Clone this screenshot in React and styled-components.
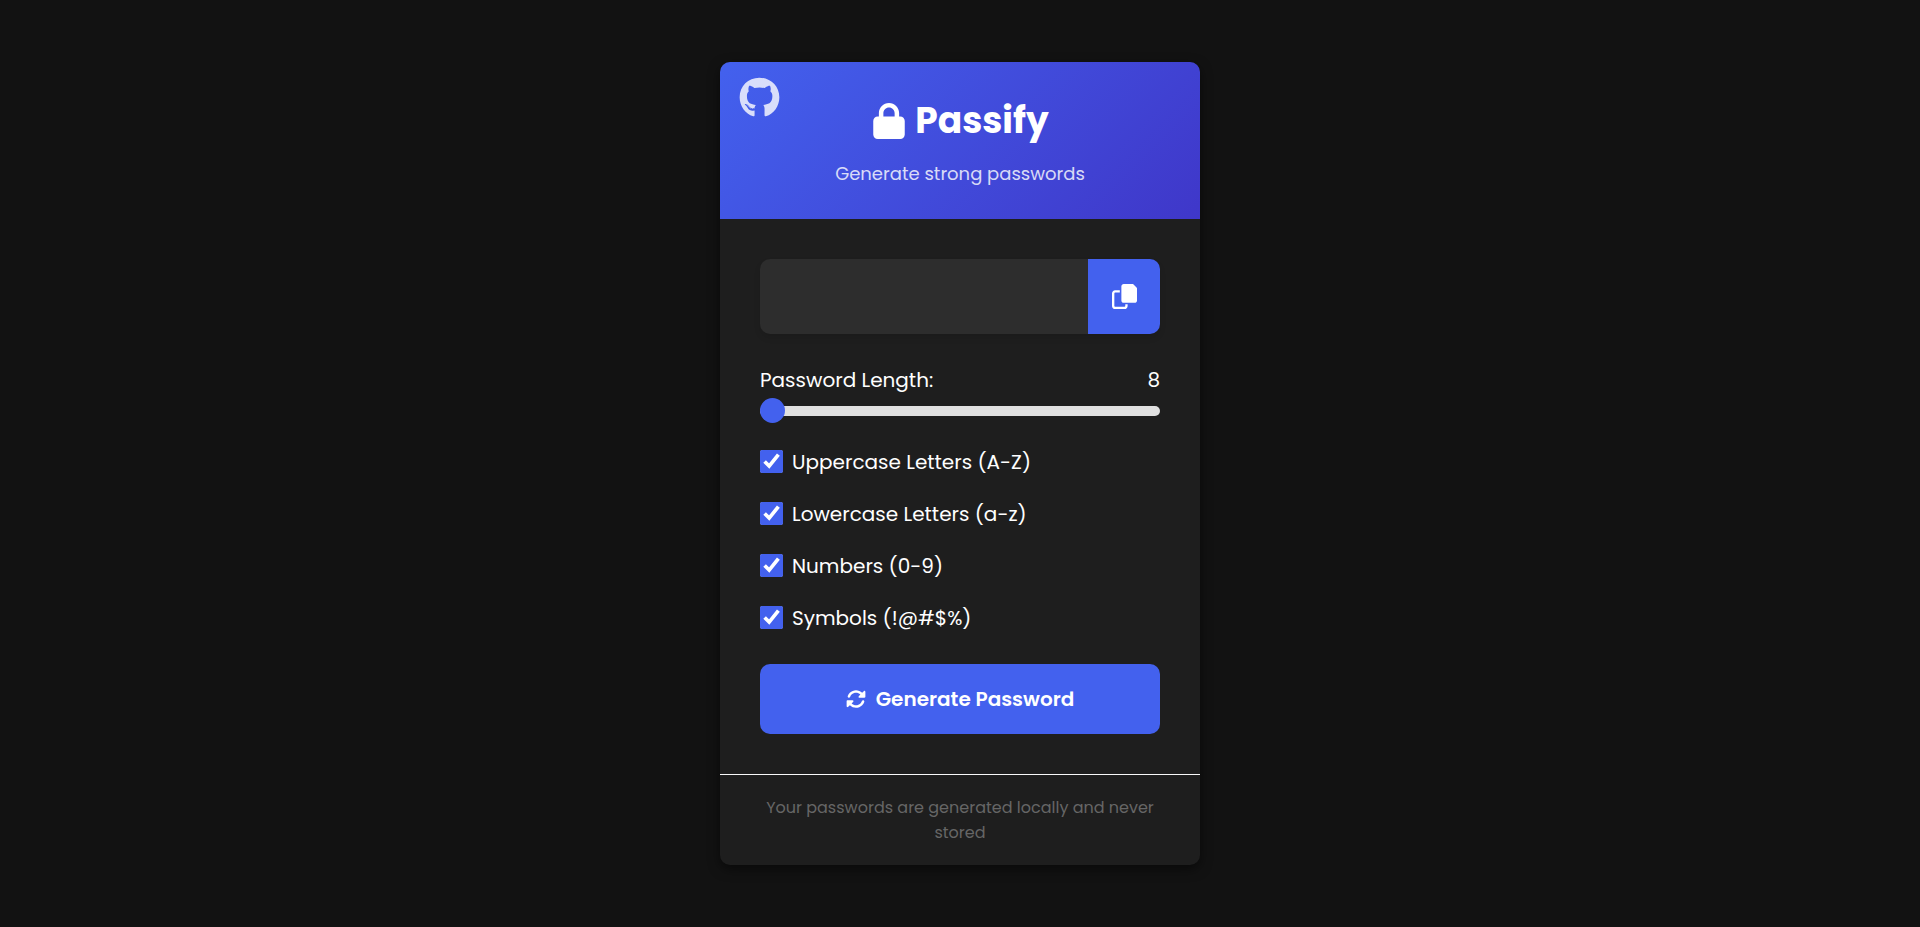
import React, { useState } from "react";
import styled, { createGlobalStyle } from "styled-components";
import { FaGithub, FaLock, FaRotate } from "react-icons/fa6";

const colors = {
  primary: "#4361ee",
  secondary: "#3f37c9",
  page: "#121212",
  card: "#1e1e1e",
  field: "#2d2d2d",
  track: "#e0e0e0",
  line: "#f8f9fa",
  muted: "#666666",
};

const GlobalStyle = createGlobalStyle`
  *, *::before, *::after { box-sizing: border-box; margin: 0; padding: 0; }
  body {
    background: ${colors.page};
    color: #ffffff;
    font-family: Poppins, Inter, sans-serif;
    font-size: 20px;
    line-height: 32px;
  }
  button, input { font-family: inherit; }
`;

const Page = styled.div`
  display: flex;
  justify-content: center;
  align-items: center;
  min-height: 100vh;
  padding: 20px;
`;

const Card = styled.main`
  width: 100%;
  max-width: 480px;
  background: ${colors.card};
  border-radius: 10px;
  box-shadow: 0 4px 12px rgba(0, 0, 0, 0.5);
  overflow: hidden;
`;

const Header = styled.header`
  position: relative;
  padding: 32px;
  text-align: center;
  background: linear-gradient(135deg, ${colors.primary}, ${colors.secondary});
`;

const GithubLink = styled.a`
  position: absolute;
  top: 15px;
  left: 19px;
  display: flex;
  color: #ffffff;
  font-size: 41px;
  opacity: 0.8;
`;

const Title = styled.h1`
  display: flex;
  justify-content: center;
  align-items: center;
  gap: 8px;
  margin-bottom: 12px;
  font-size: 36px;
  font-weight: 700;
  line-height: 54px;
`;

const Subtitle = styled.p`
  font-size: 18px;
  font-weight: 400;
  line-height: 27px;
  opacity: 0.8;
`;

const Form = styled.form`
  padding: 40px;
`;

const PasswordBox = styled.div`
  display: flex;
  height: 75px;
  margin-bottom: 30px;
  border-radius: 10px;
  box-shadow: 0 4px 6px rgba(0, 0, 0, 0.1);
  overflow: hidden;
`;

const PasswordField = styled.input`
  flex: 1;
  min-width: 0;
  padding: 0 20px;
  border: 0;
  outline: 0;
  background: ${colors.field};
  color: #ffffff;
  font-size: 20px;
`;

const CopyButton = styled.button`
  display: flex;
  justify-content: center;
  align-items: center;
  width: 72px;
  border: 0;
  background: ${colors.primary};
  color: #ffffff;
  font-size: 25px;
  cursor: pointer;
`;

const LengthRow = styled.div`
  display: flex;
  justify-content: space-between;
`;

const Slider = styled.input`
  appearance: none;
  display: block;
  width: 100%;
  height: 10px;
  margin: 10px 0 30px;
  border-radius: 5px;
  background: ${colors.track};
  outline: 0;

  &::-webkit-slider-thumb {
    appearance: none;
    width: 25px;
    height: 25px;
    margin-bottom: 1px;
    border-radius: 50%;
    background: ${colors.primary};
    cursor: pointer;
  }
`;

const Options = styled.div`
  display: grid;
  gap: 20px;
  margin-bottom: 30px;
`;

const Option = styled.label`
  display: flex;
  align-items: center;
  gap: 9px;
  cursor: pointer;
`;

const Checkbox = styled.input`
  width: 23px;
  height: 23px;
  margin-bottom: 1px;
  accent-color: ${colors.primary};
`;

const GenerateButton = styled.button`
  display: flex;
  justify-content: center;
  align-items: center;
  gap: 10px;
  width: 100%;
  height: 70px;
  border: 0;
  border-radius: 10px;
  background: ${colors.primary};
  color: #ffffff;
  font-size: 20px;
  font-weight: 600;
  cursor: pointer;
`;

const Footer = styled.footer`
  padding: 20px;
  border-top: 1px solid ${colors.line};
  color: ${colors.muted};
  font-size: 16px;
  line-height: 25px;
  text-align: center;
`;

const CopyIcon = () => (
  <svg viewBox="0 0 512 512" width="1em" height="1em" fill="currentColor" aria-hidden="true">
    <path d="M418.7 0c8.5 0 16.6 3.4 22.6 9.4l61.3 61.3c6 6 9.4 14.1 9.4 22.6V336c0 26.5-21.5 48-48 48H240c-26.5 0-48-21.5-48-48V48c0-26.5 21.5-48 48-48z" />
    <path d="M160 128v48H64c-8.8 0-16 7.2-16 16v256c0 8.8 7.2 16 16 16h192c8.8 0 16-7.2 16-16v-32h48v32c0 35.3-28.7 64-64 64H64c-35.3 0-64-28.7-64-64V192c0-35.3 28.7-64 64-64z" />
  </svg>
);

const characterSets = [
  { id: "upper", label: "Uppercase Letters (A-Z)", chars: "ABCDEFGHIJKLMNOPQRSTUVWXYZ" },
  { id: "lower", label: "Lowercase Letters (a-z)", chars: "abcdefghijklmnopqrstuvwxyz" },
  { id: "numbers", label: "Numbers (0-9)", chars: "0123456789" },
  { id: "symbols", label: "Symbols (!@#$%)", chars: "!@#$%" },
];

export default function App() {
  const [password, setPassword] = useState("");
  const [length, setLength] = useState(8);
  const [enabled, setEnabled] = useState({ upper: true, lower: true, numbers: true, symbols: true });

  const generate = (event) => {
    event.preventDefault();
    const pool = characterSets.filter((set) => enabled[set.id]).map((set) => set.chars).join("");
    if (!pool) return;
    const values = crypto.getRandomValues(new Uint32Array(length));
    setPassword(Array.from(values, (value) => pool[value % pool.length]).join(""));
  };

  return (
    <>
      <GlobalStyle />
      <Page>
        <Card>
          <Header>
            <GithubLink href="https://github.com" aria-label="GitHub">
              <FaGithub />
            </GithubLink>
            <Title>
              <FaLock />
              Passify
            </Title>
            <Subtitle>Generate strong passwords</Subtitle>
          </Header>
          <Form onSubmit={generate}>
            <PasswordBox>
              <PasswordField type="text" readOnly value={password} aria-label="Password" />
              <CopyButton
                type="button"
                aria-label="Copy password"
                onClick={() => navigator.clipboard?.writeText(password)}
              >
                <CopyIcon />
              </CopyButton>
            </PasswordBox>
            <LengthRow>
              <label htmlFor="length">Password Length:</label>
              <output htmlFor="length">{length}</output>
            </LengthRow>
            <Slider
              id="length"
              type="range"
              min="8"
              max="32"
              value={length}
              onChange={(event) => setLength(Number(event.target.value))}
            />
            <Options>
              {characterSets.map((set) => (
                <Option key={set.id}>
                  <Checkbox
                    type="checkbox"
                    checked={enabled[set.id]}
                    onChange={() => setEnabled({ ...enabled, [set.id]: !enabled[set.id] })}
                  />
                  {set.label}
                </Option>
              ))}
            </Options>
            <GenerateButton type="submit">
              <FaRotate />
              Generate Password
            </GenerateButton>
          </Form>
          <Footer>Your passwords are generated locally and never stored</Footer>
        </Card>
      </Page>
    </>
  );
}
